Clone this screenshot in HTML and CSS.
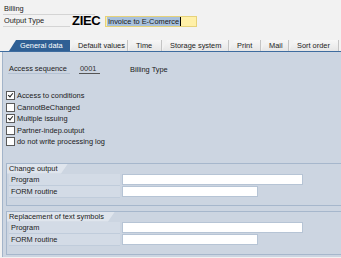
FILE: index.html
```html
<!DOCTYPE html>
<html lang="en">
<head>
  <meta charset="UTF-8">
  <title>Output Type ZIEC</title>
  <link rel="stylesheet" href="styles.css">
</head>
<body>
  <div class="header">
    <div class="hrow">
      <span class="hlabel wide">Billing</span>
    </div>
    <div class="hrow">
      <span class="hlabel">Output Type</span>
      <span class="code">ZIEC</span>
      <span class="field"><span class="sel">Invoice to E-Comerce</span><span class="caret"></span></span>
    </div>
  </div>

  <div class="tabs">
    <div class="tab active" style="width: 61px">General data</div>
    <div class="tab" style="width: 58px">Default values</div>
    <div class="tab" style="width: 34px">Time</div>
    <div class="tab" style="width: 67px">Storage system</div>
    <div class="tab" style="width: 32px">Print</div>
    <div class="tab" style="width: 28px">Mail</div>
    <div class="tab" style="width: 50px">Sort order</div>
  </div>

  <div class="panel">
    <div class="seq">
      <span class="seq-label">Access sequence</span>
      <span class="seq-value">0001</span>
      <span class="seq-text">Billing Type</span>
    </div>

    <div class="checks">
      <div class="check"><span class="box on"></span>Access to conditions</div>
      <div class="check"><span class="box"></span>CannotBeChanged</div>
      <div class="check"><span class="box on"></span>Multiple issuing</div>
      <div class="check"><span class="box"></span>Partner-indep.output</div>
      <div class="check"><span class="box"></span>do not write processing log</div>
    </div>

    <div class="group">
      <div class="group-title" style="width: 61px">Change output</div>
      <div class="grow"><span class="glabel">Program</span><span class="input long"></span></div>
      <div class="grow"><span class="glabel">FORM routine</span><span class="input short"></span></div>
    </div>

    <div class="group second">
      <div class="group-title" style="width: 108px">Replacement of text symbols</div>
      <div class="grow"><span class="glabel">Program</span><span class="input long"></span></div>
      <div class="grow"><span class="glabel">FORM routine</span><span class="input short"></span></div>
    </div>
  </div>
</body>
</html>
```

FILE: styles.css
```css
* {
  margin: 0;
  padding: 0;
  box-sizing: border-box;
}

body {
  font-family: 'Liberation Sans', Arial, sans-serif;
  font-size: 7.4px;
  color: #1a1a1a;
  background: #f2f2f2;
  width: 341px;
  height: 258px;
  overflow: hidden;
  white-space: nowrap;
}

.header {
  padding: 3px 0 0 3px;
}

.hrow {
  display: flex;
  align-items: center;
  height: 12px;
}

.hlabel {
  width: 67px;
  height: 12px;
  line-height: 11px;
  padding-left: 1px;
  border-bottom: 1px solid #d4d4d4;
}

.hlabel.wide {
  width: 92px;
}

.code {
  width: 33px;
  margin-left: 2px;
  font-size: 13px;
  font-weight: bold;
  letter-spacing: -0.3px;
  color: #000;
  line-height: 12px;
}

.field {
  display: flex;
  align-items: center;
  width: 92px;
  height: 11px;
  background: #fff0a8;
  border: 1px solid #e6d27a;
  padding-left: 1px;
}

.sel {
  background: #a7c0dc;
  line-height: 9px;
  padding: 0 1px;
}

.caret {
  width: 1px;
  height: 9px;
  background: #000;
}

.tabs {
  display: flex;
  margin-top: 13px;
  padding-left: 9px;
  height: 12px;
  border-bottom: 1px solid #3e6c9f;
}

.tab {
  height: 11px;
  line-height: 11px;
  padding-left: 8px;
  color: #222;
  background: linear-gradient(#f7f7f7, #e6e6e6);
  border-right: 1px solid #c4c4c4;
  clip-path: polygon(0 100%, 5px 0, 100% 0, 100% 100%);
}

.tab.active {
  background: #2f5f94;
  color: #fff;
  padding-left: 11px;
  border-right: none;
  clip-path: polygon(0 100%, 7px 0, 100% 0, 100% 100%);
}

.panel {
  margin-left: 2px;
  height: 205px;
  background: #ccd5e1;
  border-left: 1px solid #a3b4c9;
  padding-top: 12px;
}

.seq {
  display: flex;
  align-items: center;
  height: 10px;
  padding-left: 5px;
}

.seq-label {
  width: 62px;
  height: 10px;
  line-height: 9px;
  padding-left: 1px;
  border-bottom: 1px solid #b4c2d3;
}

.seq-value {
  margin-left: 9px;
  width: 21px;
  height: 10px;
  line-height: 9px;
  padding-left: 1px;
  color: #333;
  border-bottom: 1px solid #555;
}

.seq-text {
  margin-left: 30px;
}

.checks {
  margin-top: 16px;
  padding-left: 3px;
}

.check {
  display: flex;
  align-items: center;
  height: 11.5px;
}

.box {
  width: 9px;
  height: 9px;
  margin-right: 2px;
  background: #fff;
  border: 1px solid #5a5a5a;
  position: relative;
}

.box.on::after {
  content: "";
  position: absolute;
  left: 2px;
  top: 0;
  width: 2px;
  height: 4px;
  border: solid #222;
  border-width: 0 1.3px 1.3px 0;
  transform: rotate(40deg);
}

.group {
  margin: 15px 0 0 3px;
  border: 1px solid #a6b7cc;
  border-right: none;
  padding-bottom: 7px;
}

.group.second {
  margin-top: 5px;
  padding-bottom: 8px;
}

.group-title {
  height: 10px;
  line-height: 10px;
  padding-left: 2px;
  background: #dfe5ed;
  clip-path: polygon(0 0, 100% 0, calc(100% - 7px) 100%, 0 100%);
}

.grow {
  display: flex;
  align-items: center;
  height: 12px;
  padding-left: 2px;
}

.glabel {
  width: 111px;
  height: 12px;
  line-height: 12px;
  padding-left: 2px;
  background: #d3dbe6;
  border-bottom: 1px solid #c0ccdb;
}

.input {
  height: 11px;
  margin-left: 2px;
  background: #fff;
  border: 1px solid #b6c4d5;
}

.input.long {
  width: 181px;
}

.input.short {
  width: 136px;
}
```
